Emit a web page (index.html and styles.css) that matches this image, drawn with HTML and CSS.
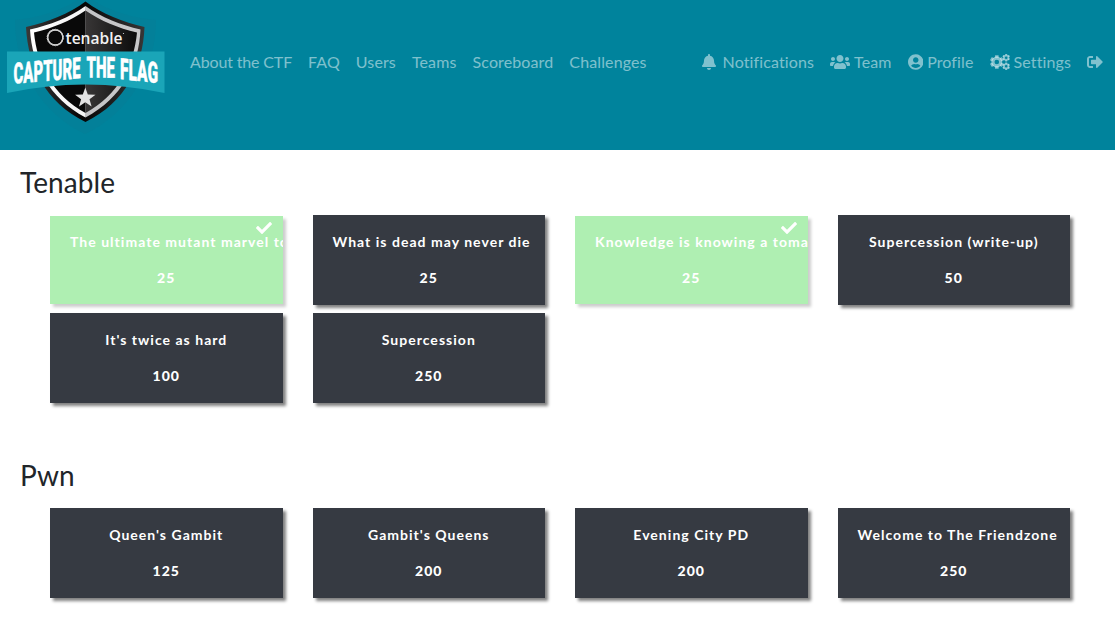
FILE: index.html
```html
<!DOCTYPE html>
<html lang="en">
<head>
<meta charset="utf-8">
<title>Tenable CTF</title>
<link rel="stylesheet" href="styles.css">
</head>
<body>
<svg class="defs" width="0" height="0" aria-hidden="true">
  <symbol id="check" viewBox="0 0 512 512"><path d="M173.898 439.404l-166.4-166.4c-9.997-9.997-9.997-26.206 0-36.204l36.203-36.204c9.997-9.998 26.207-9.998 36.204 0L192 312.69 432.095 72.596c9.997-9.997 26.207-9.997 36.204 0l36.203 36.204c9.997 9.997 9.997 26.206 0 36.204l-294.4 294.401c-9.998 9.997-26.207 9.997-36.204-.001z"/></symbol>
  <symbol id="gear" viewBox="-100 -100 200 200" overflow="visible">
    <circle r="57" fill="none" stroke="currentColor" stroke-width="46"/>
    <g><rect x="-27" y="-100" width="54" height="36" rx="6"/><rect x="-27" y="64" width="54" height="36" rx="6"/></g>
    <g transform="rotate(60)"><rect x="-27" y="-100" width="54" height="36" rx="6"/><rect x="-27" y="64" width="54" height="36" rx="6"/></g>
    <g transform="rotate(120)"><rect x="-27" y="-100" width="54" height="36" rx="6"/><rect x="-27" y="64" width="54" height="36" rx="6"/></g>
  </symbol>
</svg>
<nav class="navbar">
  <a class="brand" href="#">
    <svg width="160" height="136" viewBox="5 0 160 136">
      <defs>
        <linearGradient id="rim" x1="0" x2="1" y1="0" y2="0"><stop offset="0" stop-color="#fff"/><stop offset=".5" stop-color="#f4f4f4"/><stop offset=".5" stop-color="#c4c4c6"/><stop offset="1" stop-color="#c8c8ca"/></linearGradient>
        <linearGradient id="outer" x1="0" x2="1" y1="0" y2="0"><stop offset="0" stop-color="#3a3838"/><stop offset=".48" stop-color="#050505"/><stop offset="1" stop-color="#383636"/></linearGradient>
        <linearGradient id="right" x1="0" x2="1" y1="0" y2="0"><stop offset="0" stop-color="#383636"/><stop offset="1" stop-color="#0c0c0c"/></linearGradient>
      </defs>
      <path fill="#0a7c92" opacity=".3" d="M85 -6C70 8 40 18 15 20C15 70 42 114 85 134C128 114 156 70 156 20C130 18 100 8 85 -6z"/>
      <path fill="url(#outer)" d="M85.500 1.500C69 14 48 22 26 27C28 66 45 102 85.500 122C126 102 143 66 144.500 27C123 22 102 14 85.500 1.500z"/>
      <path fill="url(#rim)" d="M85.500 6C69 18 50 25 30 29.500C32 65 49 98 85.500 117.500C122 98 139 65 140.500 29.500C121 25 102 18 85.500 6z"/>
      <path fill="#090909" d="M85.500 10.500C70 21 53 28 34 32.500C37 65 53 95 85.500 113z"/>
      <path fill="url(#right)" d="M85.500 10.500C101 21 118 28 137 32.500C134 65 118 95 85.500 113z"/>
      <g fill="none" stroke="#d5d5d5" stroke-width=".9"><path id="hex" d="M55.300 29.200L62.500 33.300V41.700L55.300 45.800L48 41.700V33.300z"/><use href="#hex" transform="rotate(20 55.300 37.500)"/><use href="#hex" transform="rotate(40 55.300 37.500)"/></g>
      <text class="brand-name" x="65.500" y="43.500" textLength="57" lengthAdjust="spacingAndGlyphs">tenable</text>
      <circle cx="123.500" cy="33.500" r=".6" fill="#ddd"/>
      <path fill="#1aa5b8" d="M7 51.500H164.500V93Q85 76 7 93z"/>
      <g class="brand-title">
        <text transform="matrix(1 -.085 0 1.500 13.500 83.800)" textLength="67" lengthAdjust="spacingAndGlyphs">CAPTURE</text>
        <text transform="matrix(1 .01 0 1.500 86.500 77.500)" textLength="28.500" lengthAdjust="spacingAndGlyphs">THE</text>
        <text transform="matrix(1 .11 0 1.500 120 79)" textLength="38" lengthAdjust="spacingAndGlyphs">FLAG</text>
      </g>
      <path fill="#e2e2e2" d="M85.300 87.500L87.800 94.500L95.500 94.700L89.500 99.300L91.600 106.500L85.300 102.300L79 106.500L81.100 99.300L75.100 94.700L82.800 94.500z"/>
    </svg>
  </a>
  <div class="links">
    <a class="tight">About the CTF</a><a>FAQ</a><a>Users</a><a>Teams</a><a>Scoreboard</a><a>Challenges</a>
  </div>
  <div class="links links-user">
    <a><svg class="bell" width="14" height="16" viewBox="0 0 448 512"><path d="M224 512c35.320 0 63.970-28.650 63.970-64H160.030c0 35.350 28.650 64 63.970 64zm215.390-149.710c-19.320-20.760-55.470-51.990-55.470-154.290 0-77.700-54.480-139.900-127.940-155.160V32c0-17.670-14.320-32-31.980-32s-31.980 14.330-31.980 32v20.840C118.560 68.100 64.080 130.300 64.080 208c0 102.300-36.150 133.530-55.470 154.290-6 6.450-8.660 14.160-8.610 21.710.11 16.400 12.980 32 32.100 32h383.800c19.120 0 32-15.600 32.100-32 .05-7.550-2.610-15.270-8.610-21.710z"/></svg>Notifications</a>
    <a><svg width="20" height="16" viewBox="0 0 640 512"><path d="M96 224c35.300 0 64-28.700 64-64s-28.700-64-64-64-64 28.700-64 64 28.700 64 64 64zm448 0c35.300 0 64-28.700 64-64s-28.700-64-64-64-64 28.700-64 64 28.700 64 64 64zm32 32h-64c-17.600 0-33.500 7.100-45.100 18.600 40.300 22.100 68.900 62 75.100 109.400h66c17.700 0 32-14.300 32-32v-32c0-35.300-28.700-64-64-64zm-256 0c61.900 0 112-50.100 112-112S381.900 32 320 32 208 82.100 208 144s50.100 112 112 112zm76.800 32h-8.300c-20.800 10-43.900 16-68.500 16s-47.600-6-68.500-16h-8.300C179.600 288 128 339.600 128 403.200V432c0 26.500 21.500 48 48 48h288c26.500 0 48-21.500 48-48v-28.800c0-63.600-51.600-115.200-115.200-115.200zm-223.700-13.400C161.500 263.100 145.600 256 128 256H64c-35.300 0-64 28.700-64 64v32c0 17.700 14.300 32 32 32h65.900c6.300-47.400 34.900-87.300 75.200-109.400z"/></svg>Team</a>
    <a><svg width="15.500" height="16" viewBox="0 0 496 512"><path d="M248 8C111 8 0 119 0 256s111 248 248 248 248-111 248-248S385 8 248 8zm0 96c48.600 0 88 39.400 88 88s-39.400 88-88 88-88-39.400-88-88 39.400-88 88-88zm0 344c-58.700 0-111.300-26.600-146.500-68.200 18.800-35.400 55.600-59.800 98.500-59.800 2.400 0 4.800.4 7.100 1.100 13 4.200 26.600 6.900 40.900 6.900 14.300 0 28-2.700 40.900-6.900 2.300-.7 4.700-1.100 7.100-1.100 42.900 0 79.700 24.400 98.500 59.800C359.300 421.400 306.700 448 248 448z"/></svg>Profile</a>
    <a><svg width="20" height="16" viewBox="0 0 640 512"><use href="#gear" x="0" y="38" width="436" height="436"/><use href="#gear" x="396" y="-4" width="244" height="244"/><use href="#gear" x="396" y="272" width="244" height="244"/></svg>Settings</a>
    <a><svg class="out" width="16" height="16" viewBox="0 0 512 512"><path d="M497 273L329 441c-15 15-41 4.500-41-17v-96H152c-13.300 0-24-10.700-24-24v-96c0-13.300 10.700-24 24-24h136V88c0-21.400 25.900-32 41-17l168 168c9.300 9.400 9.300 24.600 0 34zM192 436v-40c0-6.600-5.400-12-12-12H96c-17.700 0-32-14.300-32-32V160c0-17.700 14.300-32 32-32h84c6.600 0 12-5.400 12-12V76c0-6.600-5.400-12-12-12H96c-53 0-96 43-96 96v192c0 53 43 96 96 96h84c6.600 0 12-5.400 12-12z"/></svg></a>
  </div>
</nav>
<main>
  <section>
    <h3>Tenable</h3>
    <div class="grid">
      <button class="card solved"><svg class="tick" width="16" height="16"><use href="#check"/></svg><span>The ultimate mutant marvel to</span><b>25</b></button>
      <button class="card"><span>What is dead may never die</span><b>25</b></button>
      <button class="card solved"><svg class="tick" width="16" height="16"><use href="#check"/></svg><span>Knowledge is knowing a tomat</span><b>25</b></button>
      <button class="card"><span>Supercession (write-up)</span><b>50</b></button>
      <button class="card"><span>It's twice as hard</span><b>100</b></button>
      <button class="card"><span>Supercession</span><b>250</b></button>
    </div>
  </section>
  <section>
    <h3>Pwn</h3>
    <div class="grid">
      <button class="card"><span>Queen's Gambit</span><b>125</b></button>
      <button class="card"><span>Gambit's Queens</span><b>200</b></button>
      <button class="card"><span>Evening City PD</span><b>200</b></button>
      <button class="card"><span>Welcome to The Friendzone</span><b>250</b></button>
    </div>
  </section>
</main>
</body>
</html>
```
FILE: styles.css
```css
* { box-sizing: border-box; }
body { margin: 0; background: #fff; color: #212529; font: 16px/24px Lato, "Liberation Sans", sans-serif; }
.defs { position: absolute; }
.navbar { height: 150px; display: flex; align-items: flex-start; background: #00839c; }
.brand { display: block; width: 160px; height: 136px; margin-left: 5px; }
.brand svg { display: block; }
.brand-name { font: 600 17px "Open Sans", sans-serif; fill: #f2f2f2; }
.brand-title { font: 900 19.500px Roboto, sans-serif; fill: #fff; stroke: #fff; stroke-width: .3px; }
.links { display: flex; gap: 16px; margin: 50px 0 0 25px; color: rgba(255, 255, 255, .5); letter-spacing: .12px; }
.links a { display: flex; align-items: center; white-space: nowrap; }
.links .tight { letter-spacing: -.15px; }
.links svg { fill: currentColor; margin-right: 4px; }
.links .bell { margin-right: 7px; }
.links .out { margin-right: 0; }
.links-user { margin-left: auto; margin-right: 12px; }
main { padding: 15px 15px 20px 20px; }
h3 { margin: 0; height: 34px; font-size: 28px; line-height: 34px; font-weight: 400; letter-spacing: .1px; }
.grid { display: grid; grid-template-columns: repeat(4, 232.500px); gap: 8px 30px; padding: 16px 0 0 30px; }
section + section { margin-top: 55px; }
.card { position: relative; height: 90px; margin: 0; padding: 16px 20px; border: 0; overflow: hidden; display: flex; flex-direction: column; align-items: safe center; gap: 15px; background: #363a42; color: #fff; font: 700 14px/21px Lato, sans-serif; letter-spacing: 1.030px; white-space: nowrap; box-shadow: 3px 3px 3px grey; }
.card.solved { height: 88px; margin-top: 1px; padding-top: 15px; background: #afefb2; box-shadow: 3px 3px 3px #ccc; }
.tick { position: absolute; top: 4px; right: 11px; fill: #fff; }
```
